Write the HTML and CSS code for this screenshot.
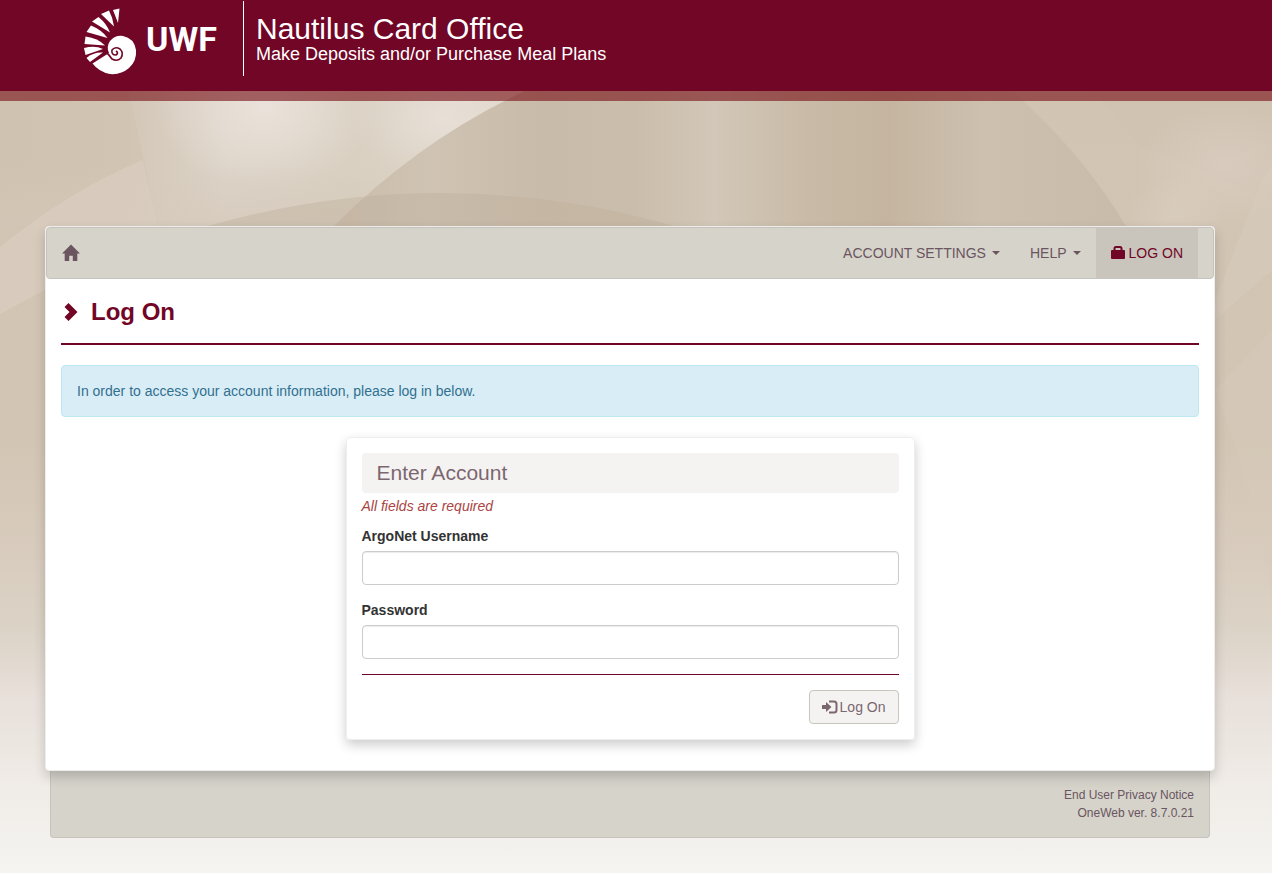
FILE: index.html
```
<!DOCTYPE html>
<html lang="en">
<head>
  <meta charset="UTF-8">
  <meta name="viewport" content="width=device-width, initial-scale=1.0">
  <title>Nautilus Card Office - Log On</title>
  <link rel="stylesheet" href="styles.css">
</head>
<body>
  <!-- Page background -->
  <svg class="backdrop" viewBox="0 0 1272 873" preserveAspectRatio="none" aria-hidden="true">
    <defs>
      <linearGradient id="base" x1="0" y1="0" x2="0" y2="1">
        <stop offset="0" stop-color="#d1c4b3"/>
        <stop offset="0.5" stop-color="#d2c5b4"/>
        <stop offset="0.64" stop-color="#d8ccbe"/>
        <stop offset="0.72" stop-color="#dbd3c6"/>
        <stop offset="0.8" stop-color="#e8e0da"/>
        <stop offset="0.9" stop-color="#f0ece7"/>
        <stop offset="1" stop-color="#f5f4f1"/>
      </linearGradient>
      <linearGradient id="folds" gradientUnits="userSpaceOnUse" x1="334" y1="0" x2="1126" y2="0">
        <stop offset="0" stop-color="#cabcaa"/>
        <stop offset="0.12" stop-color="#cfc3b3"/>
        <stop offset="0.26" stop-color="#c9bba9"/>
        <stop offset="0.38" stop-color="#cabdab"/>
        <stop offset="0.48" stop-color="#d2c7b8"/>
        <stop offset="0.6" stop-color="#c8baa6"/>
        <stop offset="0.7" stop-color="#c5b5a0"/>
        <stop offset="0.82" stop-color="#cdc0af"/>
        <stop offset="1" stop-color="#c8bba9"/>
      </linearGradient>
      <linearGradient id="left" gradientUnits="userSpaceOnUse" x1="0" y1="0" x2="500" y2="0">
        <stop offset="0" stop-color="#d1c5b4"/>
        <stop offset="0.25" stop-color="#d3c7b7"/>
        <stop offset="0.45" stop-color="#dcd3c7"/>
        <stop offset="0.7" stop-color="#d9d0c2"/>
        <stop offset="1" stop-color="#dfd7ca"/>
      </linearGradient>
      <linearGradient id="leftFade" x1="0" y1="0" x2="0" y2="1">
        <stop offset="0.55" stop-color="#d6cabc" stop-opacity="0"/>
        <stop offset="1" stop-color="#d6cabc" stop-opacity="0.8"/>
      </linearGradient>
      <radialGradient id="glow">
        <stop offset="0" stop-color="#ece3dd" stop-opacity="0.9"/>
        <stop offset="1" stop-color="#ece3dd" stop-opacity="0"/>
      </radialGradient>
      <clipPath id="leftClip">
        <path d="M0 0H650L525 91Q420 140 334 226H0Z"/>
      </clipPath>
    </defs>
    <rect width="1272" height="873" fill="url(#base)"/>
    <g clip-path="url(#leftClip)">
      <rect width="650" height="226" fill="url(#left)"/>
      <ellipse cx="265" cy="108" rx="110" ry="80" fill="url(#glow)"/>
      <ellipse cx="445" cy="118" rx="95" ry="60" fill="url(#glow)" opacity="0.8"/>
      <rect y="90" width="650" height="136" fill="url(#leftFade)"/>
      <path d="M128 90Q144 160 158 226H0V90Z" fill="#cbbca9" opacity="0.25"/>
    </g>
    <path d="M0 247Q70 190 143 160L158 226V250L45 290 0 314Z" fill="#ddd1c5" opacity="0.5"/>
    <path d="M650 40L525 91Q420 140 334 226H1126Q1080 150 1012 91L970 40Z" fill="url(#folds)"/>
    <path d="M1090 91L1272 91V200L1140 145Z" fill="#cfc2b1" opacity="0.5"/>
    <ellipse cx="1225" cy="165" rx="90" ry="60" fill="url(#glow)" opacity="0.3"/>
    <ellipse cx="1175" cy="215" rx="50" ry="40" fill="url(#glow)" opacity="0.25"/>
    <path d="M208 226Q440 160 674 226Z" fill="#bdae9b" opacity="0.4"/>
    <path d="M1215 300L1262 180 1272 165V270L1215 320Z" fill="#dccfc2" opacity="0.3"/>
    <path d="M1215 390Q1255 490 1272 600V330Z" fill="#d8cbbb" opacity="0.4"/>
  </svg>

  <header class="site-header">
    <div class="brand">
      <a class="logo" href="#" aria-label="UWF home">
        <svg class="shell" viewBox="0 0 54 68" aria-hidden="true">
          <g fill="#fff">
            <path d="M8.500 56.500L25 46Q22 40 26 34Q31 28 39 29Q50 31 52 43Q53 54 45 61Q37 68 26 67Q15 65 8.500 56.500Z"/>
            <path d="M29 3L35.500 1.500 34 16Z"/>
            <path d="M17 7L25 3.500Q29 11 30 19.500Z"/>
            <path d="M8 14.500L14.500 10Q23 17 26 25.500Z"/>
            <path d="M2.500 25L7 18.500Q18 23 23.500 31Z"/>
            <path d="M.5 37L1.500 29.500Q14 31 21 38.500Z"/>
            <path d="M1.500 48L0 41Q11 38 19 42Z"/>
            <path d="M6 55L2.500 51Q9 45 19 45.500Z"/>
          </g>
          <path d="M20 44Q25 47 28 52Q33 55 37 51Q40 46 36 42Q31 39 28 43Q27 48 32 48Q35 46 32 44" fill="none" stroke="#710626" stroke-width="1.600"/>
        </svg>
        <span class="logo-text">UWF</span>
      </a>
      <div class="brand-text">
        <div class="brand-title">Nautilus Card Office</div>
        <div class="brand-subtitle">Make Deposits and/or Purchase Meal Plans</div>
      </div>
    </div>
  </header>

  <div class="container">
    <main class="panel">
      <nav class="navbar">
        <a class="nav-home" href="#" aria-label="Home">
          <svg width="18" height="18" viewBox="0 0 20 19" aria-hidden="true">
            <path d="M10 0L20 10H17V18.500H12V12.500H8V18.500H3V10H0Z" fill="#6a5560"/>
          </svg>
        </a>
        <ul class="nav-links">
          <li><a href="#">ACCOUNT SETTINGS <span class="caret"></span></a></li>
          <li><a href="#">HELP <span class="caret"></span></a></li>
          <li>
            <a class="active" href="#">
              <svg width="14" height="14" viewBox="0 0 14 14" aria-hidden="true">
                <path d="M3.500 6V2.500Q3.500 1 5 1H9Q10.500 1 10.500 2.500V6" fill="none" stroke="#710626" stroke-width="2"/>
                <rect y="4" width="14" height="9" rx="1" fill="#710626"/>
              </svg>
              LOG ON
            </a>
          </li>
        </ul>
      </nav>

      <div class="content">
        <h1 class="page-title">
          <svg width="14" height="18" viewBox="0 0 14 18" aria-hidden="true">
            <path d="M4.500 0L13.500 9 4.500 18 .5 14 5.500 9 .5 4Z" fill="#710626"/>
          </svg>
          Log On
        </h1>

        <div class="alert">In order to access your account information, please log in below.</div>

        <!-- Log on form -->
        <form class="card">
          <h2 class="card-title">Enter Account</h2>
          <p class="required">All fields are required</p>
          <div class="form-group">
            <label for="username">ArgoNet Username</label>
            <input type="text" id="username" />
          </div>
          <div class="form-group">
            <label for="password">Password</label>
            <input type="password" id="password" />
          </div>
          <div class="form-actions">
            <button type="submit">
              <svg width="16" height="14" viewBox="0 0 16 14" aria-hidden="true">
                <path d="M0 5H4V2L9.500 7 4 12V9H0Z" fill="#7b6770"/>
                <path d="M7 1.500H12Q14.500 1.500 14.500 4V10Q14.500 12.500 12 12.500H7" fill="none" stroke="#7b6770" stroke-width="2"/>
              </svg>
              Log On
            </button>
          </div>
        </form>
      </div>
    </main>

    <footer class="footer">
      <a href="#">End User Privacy Notice</a>
      <div>OneWeb ver. 8.7.0.21</div>
    </footer>
  </div>
</body>
</html>
```
FILE: styles.css
```
* {
  box-sizing: border-box;
}
body {
  position: relative;
  margin: 0;
  min-height: 100vh;
  font-family: "Liberation Sans", Arial, sans-serif;
  font-size: 14px;
  line-height: 20px;
  color: #333;
  background-color: #f5f4f1;
}
.backdrop {
  position: absolute;
  top: 0;
  left: 0;
  width: 100%;
  height: 100%;
  z-index: -1;
}
a {
  text-decoration: none;
  color: #6a5560;
}

/* Header */
.site-header {
  height: 101px;
  padding-right: 12px;
  background-color: #710626;
  background-clip: padding-box;
  border-bottom: 10px solid rgba(125, 26, 31, 0.65);
}
.brand {
  display: flex;
  max-width: 1170px;
  margin: 0 auto;
  padding: 1px 39px 0;
}
.logo {
  display: flex;
  align-items: center;
  gap: 8px;
  width: 160px;
  height: 75px;
  border-right: 1px solid #fff;
}
.shell {
  width: 54px;
  height: 68px;
  margin-top: 4px;
}
.logo-text {
  font-family: "Liberation Sans Narrow", Roboto, sans-serif;
  font-size: 34px;
  font-weight: bold;
  line-height: 40px;
  color: #fff;
}
.brand-text {
  padding: 12px 0 0 12px;
  color: #fff;
}
.brand-title {
  font-size: 30px;
  line-height: 31px;
}
.brand-subtitle {
  font-size: 18px;
  line-height: 20px;
}

/* Main panel */
.container {
  padding: 125px 12px 35px 0;
}
.panel {
  position: relative;
  max-width: 1170px;
  margin: 0 auto;
  background-color: #fff;
  border: 1px solid #eeedeb;
  border-radius: 4px;
  box-shadow: 0 6px 12px rgba(0, 0, 0, 0.18);
}
.navbar {
  display: flex;
  justify-content: space-between;
  padding: 0 15px;
  background-color: #d6d3cb;
  border: 1px solid #c5c3bc;
  border-radius: 4px;
}
.nav-home {
  display: flex;
  align-items: center;
}
.nav-links {
  display: flex;
  margin: 0;
  padding: 0;
  list-style: none;
}
.nav-links a {
  display: flex;
  align-items: center;
  gap: 4px;
  padding: 15px;
}
.nav-links .active {
  background-color: #c9c5bd;
  color: #710626;
}
.caret {
  margin-left: 2px;
  border-top: 4px solid;
  border-left: 4px solid transparent;
  border-right: 4px solid transparent;
}
.content {
  padding: 17px 15px 30px;
}
.page-title {
  display: flex;
  align-items: center;
  gap: 13px;
  margin: 0 0 20px;
  padding: 0 0 15px 3px;
  border-bottom: 2px solid #710626;
  font-size: 24px;
  line-height: 32px;
  color: #710626;
}
.alert {
  padding: 15px;
  background-color: #d9edf7;
  border: 1px solid #bce8f1;
  border-radius: 4px;
  color: #31708f;
}

/* Form */
.card {
  width: 50%;
  margin: 20px auto 0;
  padding: 15px;
  border: 1px solid #eee;
  border-radius: 4px;
  box-shadow: 0 5px 12px rgba(0, 0, 0, 0.2);
}
.card-title {
  margin: 0;
  padding: 0 15px;
  background-color: #f5f3f2;
  border-radius: 4px;
  font-size: 21px;
  font-weight: normal;
  line-height: 40px;
  color: #7b6770;
}
.required {
  margin: 3px 0 10px;
  font-style: italic;
  color: #a94442;
}
.form-group {
  margin-bottom: 15px;
}
.form-group label {
  display: block;
  margin-bottom: 5px;
  font-weight: bold;
}
.form-group input {
  display: block;
  width: 100%;
  height: 34px;
  padding: 6px 12px;
  font-size: 14px;
  background-color: #fff;
  border: 1px solid #ccc;
  border-radius: 4px;
  box-shadow: inset 0 1px 1px rgba(0, 0, 0, 0.08);
}
.form-actions {
  display: flex;
  justify-content: flex-end;
  padding-top: 15px;
  border-top: 1px solid #710626;
}
button {
  display: flex;
  align-items: center;
  gap: 2px;
  padding: 6px 12px;
  background-color: #f5f3f2;
  border: 1px solid #c9c5bd;
  border-radius: 4px;
  font-family: inherit;
  font-size: 14px;
  line-height: 20px;
  color: #7b6770;
  cursor: pointer;
}
button:hover {
  background-color: #e6e3e0;
}

/* Footer */
.footer {
  max-width: 1160px;
  margin: 0 auto;
  padding: 15px;
  background-color: #d6d3cb;
  border: 1px solid #c5c3bc;
  border-top: none;
  border-radius: 0 0 4px 4px;
  font-size: 12px;
  line-height: 18px;
  text-align: right;
  color: #6a5560;
}
```
